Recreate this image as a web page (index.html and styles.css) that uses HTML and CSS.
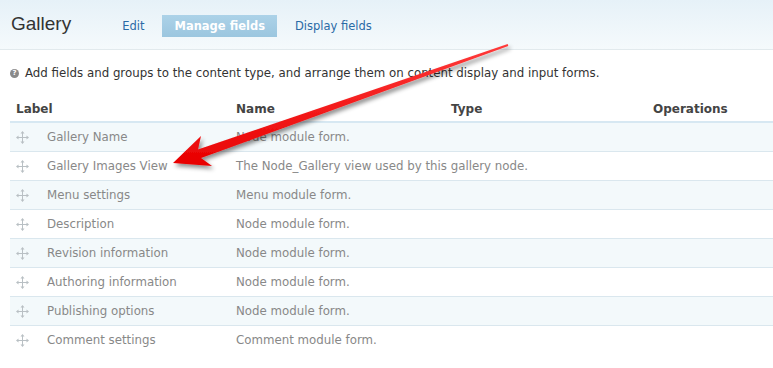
FILE: index.html
```html
<!DOCTYPE html>
<html lang="en">
<head>
    <meta charset="UTF-8">
    <title>Gallery - Manage fields</title>
    <link rel="stylesheet" href="styles.css">
</head>
<body>
    <div class="header">
        <h1 class="title">Gallery</h1>
        <ul class="tabs">
            <li><a href="#">Edit</a></li>
            <li class="active"><a href="#">Manage fields</a></li>
            <li><a href="#">Display fields</a></li>
        </ul>
    </div>

    <p class="help">
        <span class="help-icon">?</span>
        Add fields and groups to the content type, and arrange them on content display and input forms.
    </p>

    <table class="fields">
        <colgroup>
            <col class="col-label">
            <col class="col-name">
            <col class="col-type">
            <col>
        </colgroup>
        <thead>
            <tr>
                <th>Label</th>
                <th>Name</th>
                <th>Type</th>
                <th>Operations</th>
            </tr>
        </thead>
        <tbody id="rows"></tbody>
    </table>

    <!-- arrow drawn on top of the screenshot -->
    <svg class="arrow" width="773" height="368" viewBox="0 0 773 368">
        <defs>
            <filter id="shadow" x="-10%" y="-10%" width="130%" height="140%">
                <feDropShadow dx="2" dy="3" stdDeviation="2" flood-color="#000" flood-opacity="0.45"/>
            </filter>
            <linearGradient id="red" x1="0" y1="0" x2="0" y2="1">
                <stop offset="0" stop-color="#ff3a3a"/>
                <stop offset="1" stop-color="#e80000"/>
            </linearGradient>
        </defs>
        <polygon filter="url(#shadow)" fill="url(#red)"
            points="173,163 201,136 198,149.5 507.7,44 508.3,46 201,158 212,166"/>
    </svg>

    <script>
        const rows = [
            ['Gallery Name', 'Node module form.'],
            ['Gallery Images View', 'The Node_Gallery view used by this gallery node.'],
            ['Menu settings', 'Menu module form.'],
            ['Description', 'Node module form.'],
            ['Revision information', 'Node module form.'],
            ['Authoring information', 'Node module form.'],
            ['Publishing options', 'Node module form.'],
            ['Comment settings', 'Comment module form.']
        ];

        const handle = '<svg class="handle" width="13" height="13" viewBox="0 0 13 13">' +
            '<path d="M6.5 1v11M1 6.5h11" stroke="#b9c0c4" stroke-width="1" fill="none"/>' +
            '<path d="M6.5 0l2 2.5h-4zM6.5 13l2-2.5h-4zM0 6.5l2.5-2v4zM13 6.5l-2.5-2v4z" fill="#b9c0c4"/>' +
            '</svg>';

        const body = document.getElementById('rows');
        rows.forEach(function (r, i) {
            const tr = document.createElement('tr');
            tr.className = i % 2 === 0 ? 'odd' : 'even';
            tr.innerHTML = '<td><div class="label">' + handle + '<span>' + r[0] + '</span></div></td>' +
                '<td>' + r[1] + '</td><td></td><td></td>';
            body.appendChild(tr);
        });
    </script>
</body>
</html>
```

FILE: styles.css
```css
body {
    margin: 0;
    font-family: "DejaVu Sans", Verdana, sans-serif;
    font-size: 11.8px;
    color: #333;
    background: #fff;
    position: relative;
    width: 773px;
    height: 368px;
    overflow: hidden;
}

/* top band with title and tabs */
.header {
    display: flex;
    align-items: center;
    height: 50px;
    padding-left: 11px;
    background: linear-gradient(to bottom, #e6f1f8, #f5fafc);
    border-bottom: 1px solid #e2eaed;
    box-sizing: border-box;
}

.title {
    margin: 0 38px 2px 0;
    font-family: "Liberation Sans", Arial, sans-serif;
    font-size: 19px;
    font-weight: normal;
    color: #333;
}

.tabs {
    display: flex;
    gap: 5px;
    margin: 3px 0 0;
    padding: 0;
    list-style: none;
}

.tabs a {
    display: block;
    padding: 0 13px;
    line-height: 22px;
    font-size: 11.5px;
    color: #2a6aa6;
    text-decoration: none;
}

.tabs .active a {
    padding: 0 12px;
    color: #fff;
    font-weight: bold;
    background: linear-gradient(to bottom, #acd2e8, #9bc6df);
}

/* help line */
.help {
    display: flex;
    align-items: center;
    gap: 6px;
    margin: 17px 0 0 10px;
    line-height: 13px;
}

.help-icon {
    display: inline-flex;
    justify-content: center;
    align-items: center;
    width: 9px;
    height: 9px;
    border-radius: 50%;
    background: #8a8a8a;
    color: #fff;
    font-size: 7px;
    font-weight: bold;
}

/* field table */
.fields {
    margin: 16px 0 0 10px;
    width: 763px;
    border-collapse: collapse;
    table-layout: fixed;
}

.col-label { width: 220px; }
.col-name { width: 215px; }
.col-type { width: 202px; }

.fields th {
    text-align: left;
    font-size: 12px;
    color: #444;
    padding: 0 6px;
    height: 25px;
    border-bottom: 2px solid #d7e8f2;
}

.fields td {
    height: 28px;
    padding: 0 6px;
    color: #888;
    border-bottom: 1px solid #dae7ee;
    white-space: nowrap;
}

.fields tr:last-child td {
    border-bottom: none;
}

.fields tr.odd td {
    background: #f3f9fb;
}

.label {
    display: flex;
    align-items: center;
    gap: 18px;
}

.handle {
    flex: none;
}

.arrow {
    position: absolute;
    top: 0;
    left: 0;
    pointer-events: none;
}
```
